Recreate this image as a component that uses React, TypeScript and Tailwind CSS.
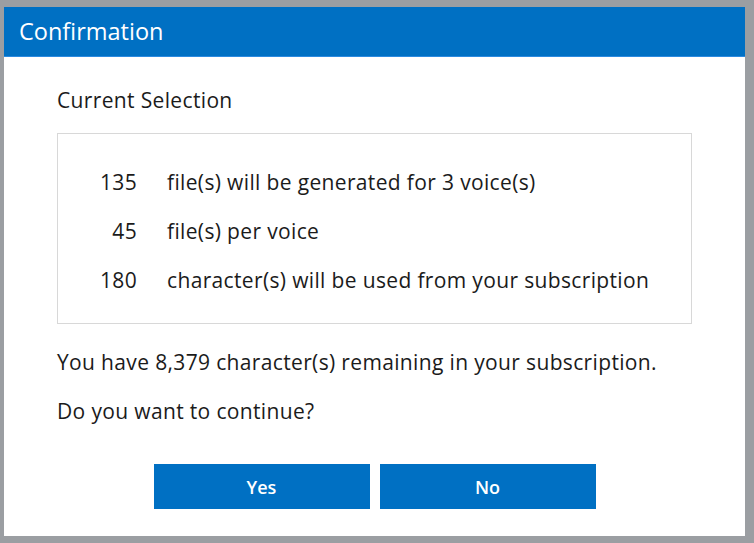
import React from "react";

const FILAS = [
  { n: "135", texto: "file(s) will be generated for 3 voice(s)" },
  { n: "45", texto: "file(s) per voice" },
  { n: "180", texto: "character(s) will be used from your subscription" },
];

export default function App() {
  return (
    <div
      className="w-[754px] h-[543px] bg-[#9b9ea2] pt-[7px] pl-[4px] pr-[9px] pb-[7px] text-[#1b1b1b]"
      style={{ fontFamily: '"Open Sans", "Noto Sans", sans-serif' }}
    >
      <div className="flex h-full flex-col bg-white">
        <div className="flex h-[50px] items-center border-b border-[#2b8ae0] bg-[#0070c3] pl-[15px] text-[23.5px] text-white">
          Confirmation
        </div>

        <div className="flex flex-1 flex-col pl-[53px] pr-[53px] text-[21px] leading-[28px] tracking-[0.35px]">
          <p className="mt-[29px]">Current Selection</p>

          <div className="mt-[19px] flex h-[191px] flex-col gap-[21px] border border-[#d8d8d8] pt-[34px]">
            {FILAS.map((f) => (
              <div key={f.n} className="flex">
                <span className="w-[79px] text-right">{f.n}</span>
                <span className="ml-[30px]">{f.texto}</span>
              </div>
            ))}
          </div>

          <p className="mt-[24px]">You have 8,379 character(s) remaining in your subscription.</p>
          <p className="mt-[21px]">Do you want to continue?</p>

          <div className="mt-[39px] flex justify-center gap-[10px]">
            <button
              type="button"
              className="h-[45px] w-[216px] bg-[#0070c3] text-[18px] font-semibold tracking-normal text-white"
            >
              Yes
            </button>
            <button
              type="button"
              className="h-[45px] w-[216px] bg-[#0070c3] text-[18px] font-semibold tracking-normal text-white"
            >
              No
            </button>
          </div>
        </div>
      </div>
    </div>
  );
}
